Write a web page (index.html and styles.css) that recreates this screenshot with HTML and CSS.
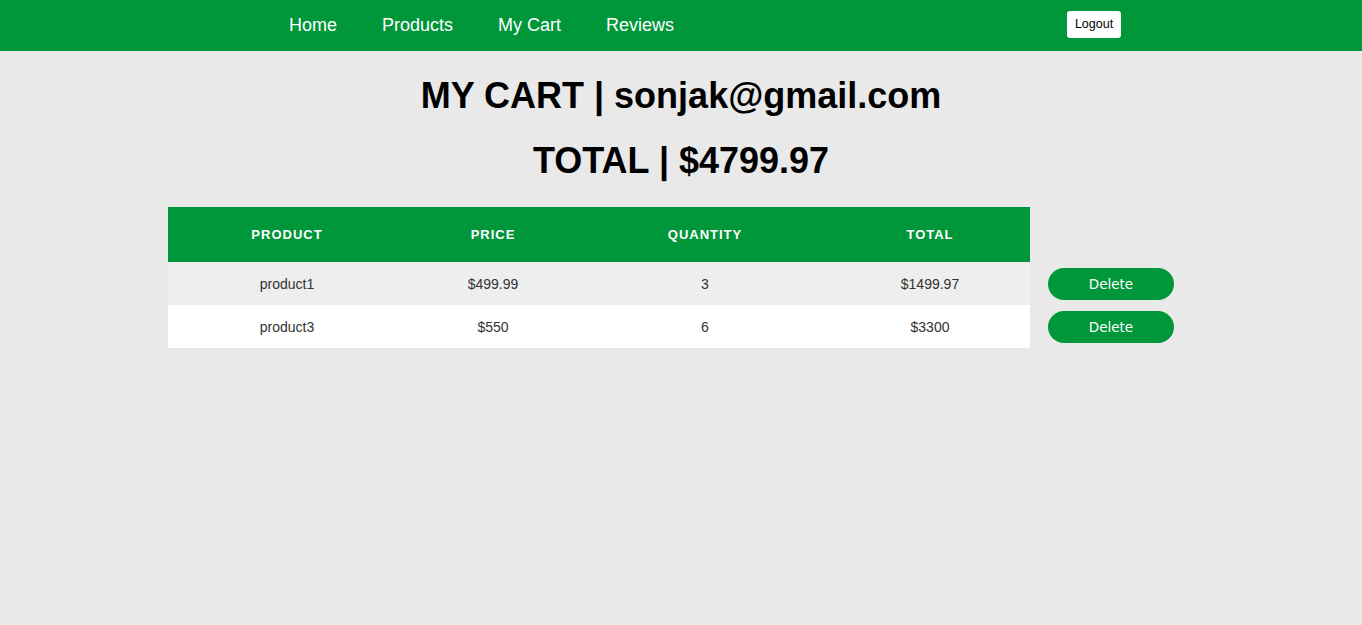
FILE: index.html
```html
<!DOCTYPE html>
<html>
<head>
<meta charset="utf-8">
<link rel="stylesheet" href="styles.css">
</head>
<body>
<header class="navbar">
  <nav class="nav-links">
    <a href="#">Home</a>
    <a href="#">Products</a>
    <a href="#">My Cart</a>
    <a href="#">Reviews</a>
  </nav>
  <button class="logout">Logout</button>
</header>
<main>
  <h1 class="title">MY CART | sonjak@gmail.com</h1>
  <h1 class="title">TOTAL | $4799.97</h1>
  <table class="cart">
    <colgroup>
      <col class="c1"><col class="c2"><col class="c3"><col class="c4"><col class="c5">
    </colgroup>
    <thead>
      <tr>
        <th>PRODUCT</th><th>PRICE</th><th>QUANTITY</th><th>TOTAL</th><th class="blank"></th>
      </tr>
    </thead>
    <tbody>
      <tr class="odd">
        <td>product1</td><td>$499.99</td><td>3</td><td>$1499.97</td>
        <td class="action"><button class="delete">Delete</button></td>
      </tr>
      <tr class="even">
        <td>product3</td><td>$550</td><td>6</td><td>$3300</td>
        <td class="action"><button class="delete">Delete</button></td>
      </tr>
    </tbody>
  </table>
</main>
</body>
</html>
```
FILE: styles.css
```css
* { box-sizing: border-box; }
body {
  margin: 0;
  background: #e9e9e9;
  font-family: "Liberation Sans", Arial, sans-serif;
}
.navbar {
  height: 51px;
  background: #00963a;
  display: flex;
  align-items: center;
  justify-content: space-between;
  padding: 0 241px 0 289px;
}
.nav-links {
  display: flex;
  gap: 45px;
}
.nav-links a {
  color: #fff;
  text-decoration: none;
  font-size: 18px;
}
.logout {
  background: #fff;
  border: none;
  border-radius: 3px;
  font-family: "Liberation Sans", Arial, sans-serif;
  font-size: 12.5px;
  color: #000;
  height: 27px;
  width: 54px;
  padding: 0;
  margin-top: -3px;
}
.title {
  text-align: center;
  font-size: 36px;
  font-weight: bold;
  margin: 24px 0;
  line-height: 41px;
}
.cart {
  border-collapse: collapse;
  margin: 26px auto 0;
  width: 1026px;
  table-layout: fixed;
}
.c1 { width: 238px; }
.c2 { width: 174px; }
.c3 { width: 250px; }
.c4 { width: 200px; }
.c5 { width: 164px; }
.cart th {
  background: #00963a;
  color: #fff;
  font-size: 13px;
  font-weight: bold;
  letter-spacing: 1px;
  height: 55px;
  padding: 0;
  text-align: center;
}
.cart th.blank { background: transparent; }
.cart td {
  height: 43px;
  padding: 0;
  text-align: center;
  font-size: 14px;
  color: #333;
}
.cart tr.odd td { background: #efeeee; }
.cart tr.even td { background: #fff; }
.cart tr td.action { background: transparent; }
.delete {
  width: 126px;
  height: 32px;
  border: none;
  border-radius: 16px;
  background: #00963a;
  color: #fff;
  font-family: "DejaVu Sans", Verdana, sans-serif;
  font-size: 13.5px;
  padding: 0;
  display: block;
  margin: 0 0 0 18px;
}
```
